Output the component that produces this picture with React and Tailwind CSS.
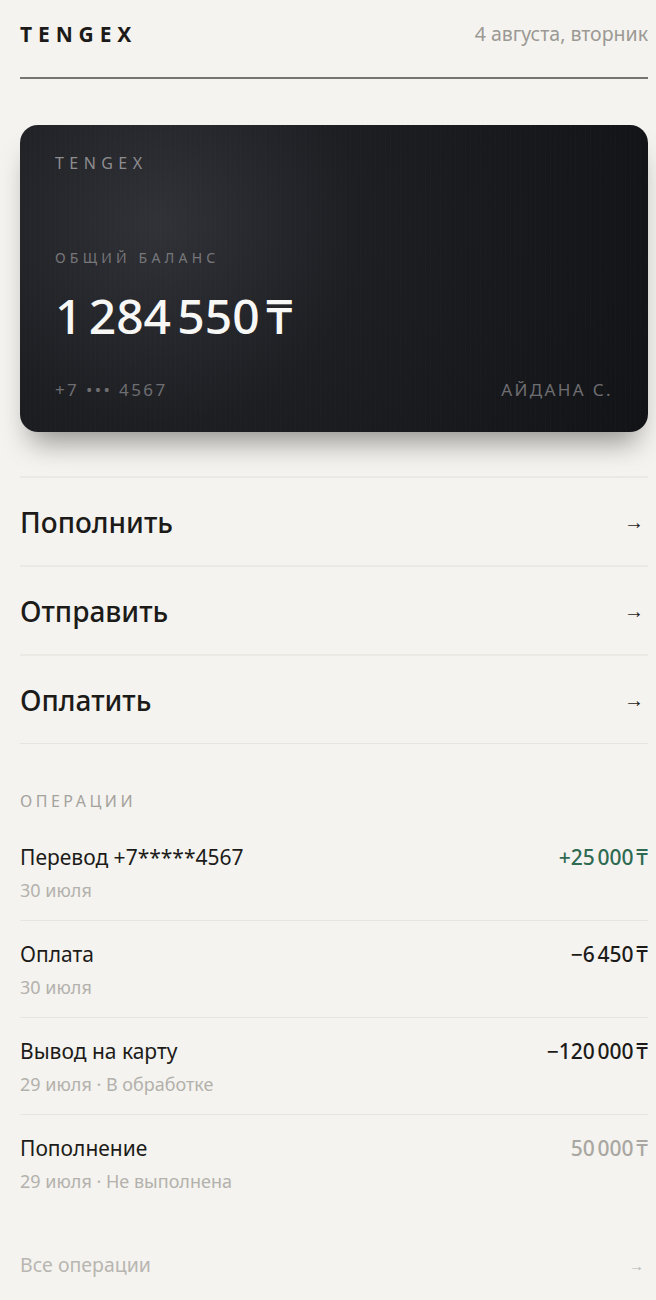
import React from "react";

const actions = ["Пополнить", "Отправить", "Оплатить"];

const operations = [
  { title: "Перевод +7*****4567", meta: "30 июля", amount: "+25 000 ₸", tone: "text-[#2f6a52]" },
  { title: "Оплата", meta: "30 июля", amount: "−6 450 ₸", tone: "text-[#1c1b19]" },
  { title: "Вывод на карту", meta: "29 июля · В обработке", amount: "−120 000 ₸", tone: "text-[#1c1b19]" },
  { title: "Пополнение", meta: "29 июля · Не выполнена", amount: "50 000 ₸", tone: "text-[#a9a7a2]" },
];

// groups of digits are set with a narrow gap, like a thin space
const Money = ({ value }) => {
  const parts = value.split(" ");
  return (
    <span className="whitespace-nowrap">
      {parts.map((p, i) => (
        <React.Fragment key={i}>
          {i > 0 && <span className="inline-block w-[0.13em]" />}
          {p}
        </React.Fragment>
      ))}
    </span>
  );
};

const App = () => {
  return (
    <div className="min-h-[1300px] bg-[#f4f3ef] pl-5 pr-2 text-[#1c1b19] font-['Noto_Sans','Open_Sans',sans-serif]">
      {/* header */}
      <div className="flex items-center justify-between pt-[19px] pb-[28px] border-b-2 border-[#76746f]">
        <span className="text-[21px] leading-[30px] font-bold tracking-[0.28em]">TENGEX</span>
        <span className="text-[19.5px] leading-[28px] text-[#9b9994]">4 августа, вторник</span>
      </div>

      {/* card */}
      <div className="mt-[46px] h-[307px] rounded-[18px] px-[35px] pt-[27px] pb-[30px] flex flex-col text-white shadow-[0_20px_28px_-10px_rgba(0,0,0,0.4)] bg-[repeating-linear-gradient(90deg,rgba(255,255,255,0.01)_0px,rgba(255,255,255,0.01)_1px,transparent_1px,transparent_5px),radial-gradient(circle_at_22%_32%,#313237_0%,#1d1e22_38%,#121316_100%)]">
        <div className="text-[16px] leading-[22px] tracking-[0.34em] text-[#8d8d90]">TENGEX</div>
        <div className="mt-[74px] text-[14px] leading-[20px] tracking-[0.3em] text-[#77777b]">ОБЩИЙ БАЛАНС</div>
        <div className="mt-[24px] text-[48px] leading-none font-medium text-[#f7f7f5]">
          <Money value="1 284 550 ₸" />
        </div>
        <div className="mt-auto flex justify-between text-[17px] tracking-[0.14em] text-[#6e6e72]">
          <span>+7 ••• 4567</span>
          <span>АЙДАНА С.</span>
        </div>
      </div>

      {/* actions */}
      <div className="mt-[44px] border-b border-[#e6e4df]">
        {actions.map((a) => (
          <div key={a} className="flex h-[89px] items-center justify-between border-t-2 border-[#ebe9e4]">
            <span className="text-[28px] font-medium">{a}</span>
            <span className="text-[20px] pr-1">→</span>
          </div>
        ))}
      </div>

      {/* operations */}
      <div className="mt-[46px] text-[16px] leading-[22px] tracking-[0.22em] text-[#a4a29d]">ОПЕРАЦИИ</div>
      <div className="mt-[31px]">
        {operations.map((op, i) => (
          <div
            key={op.title}
            className={`flex justify-between pb-[19px] ${i === 0 ? "" : "pt-[19px]"} ${i < operations.length - 1 ? "border-b border-[#e7e5e0]" : ""}`}
          >
            <div>
              <div className="text-[21px] leading-[28px]">{op.title}</div>
              <div className="mt-[8px] text-[18px] leading-[22px] text-[#b3b1ac]">{op.meta}</div>
            </div>
            <div className={`text-[21px] leading-[28px] font-medium ${op.tone}`}>
              <Money value={op.amount} />
            </div>
          </div>
        ))}
      </div>

      <div className="mt-[41px] flex items-center justify-between text-[19.5px] leading-[26px] text-[#b8b6b1]">
        <span>Все операции</span>
        <span className="text-[15px] pr-1">→</span>
      </div>
    </div>
  );
};

export default App;
